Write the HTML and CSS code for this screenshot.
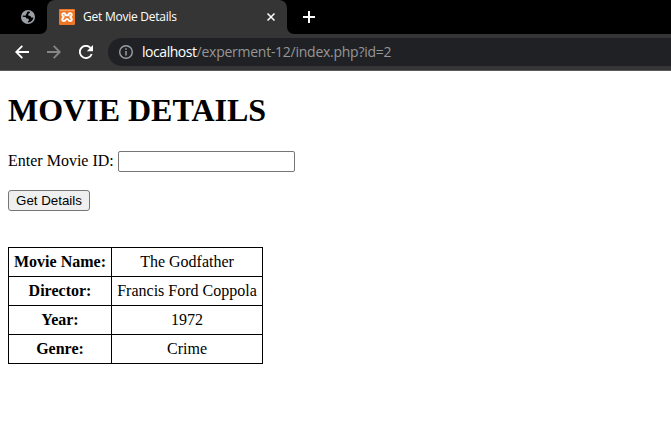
FILE: index.html
```html
<!DOCTYPE html>
<html lang="en">
<head>
<meta charset="utf-8">
<title>Get Movie Details</title>
<link rel="stylesheet" href="styles.css">
</head>
<body>
<header class="browser">
  <div class="tabs">
    <div class="strip-left">
      <svg width="14" height="14" viewBox="0 0 14 14"><circle cx="7" cy="7" r="7" fill="#9aa0a6"/><path d="M6.6 1.6C8.2 1.2 9 1.8 9 2.8L7.2 4 7.4 5.4 9.5 6 10.2 7.5 12.4 7.4C12 10.2 10 12.3 7.2 12.5L6.8 11.5 8.1 10.2 7.4 8.8 5.1 8.3 4.7 7 1.6 6.8C1.7 6.3 1.8 5.9 2 5.5L4.4 5.8 5.2 4.2Z" fill="#000"/></svg>
    </div>
    <div class="tab">
      <svg class="favicon" width="16" height="16" viewBox="0 0 16 16"><rect width="16" height="16" rx="1" fill="#ef7623"/><rect x="1" y="1" width="14" height="1" fill="#f6a365"/><path d="M6.3 6.2V5C6.3 3.9 3.2 3.6 3.2 5.7 3.2 7.3 4.7 7.3 4.7 8.1 4.7 8.9 3.2 8.9 3.2 10.4 3.2 12.5 6 12.4 6.6 10.9L7.3 10.1H8.7L9.4 10.9C10 12.4 12.8 12.5 12.8 10.4 12.8 8.9 11.3 8.9 11.3 8.1 11.3 7.3 12.8 7.3 12.8 5.7 12.8 3.6 9.7 3.9 9.7 5V6.2Z" fill="none" stroke="#fff" stroke-width="1.9" stroke-linejoin="round"/></svg>
      <span class="tab-title">Get Movie Details</span>
      <svg class="close" width="8" height="8" viewBox="0 0 8 8"><path d="M.5.5l7 7M7.5.5l-7 7" stroke="#fff" stroke-width="1.5"/></svg>
    </div>
    <div class="strip-right">
      <svg width="12" height="12" viewBox="0 0 12 12"><path d="M6 0v12M0 6h12" stroke="#fff" stroke-width="2"/></svg>
    </div>
  </div>
  <div class="toolbar">
    <svg width="14" height="14" viewBox="0 0 14 14"><path d="M14 7H1.5M7.3.8L1.2 7l6.1 6.2" fill="none" stroke="#fff" stroke-width="1.8"/></svg>
    <svg width="14" height="14" viewBox="0 0 14 14"><path d="M0 7h12.5M6.7.8L12.8 7l-6.1 6.2" fill="none" stroke="#868686" stroke-width="1.8"/></svg>
    <svg width="14" height="14" viewBox="0 0 14 14"><path d="M12.7 9A6.1 6.1 0 1 1 11.5 2.9" fill="none" stroke="#fff" stroke-width="1.9"/><path d="M14 0v6.2H7.8Z" fill="#fff"/></svg>
    <div class="address">
      <svg width="14" height="14" viewBox="0 0 14 14"><circle cx="7" cy="7" r="6.3" fill="none" stroke="#9aa0a6" stroke-width="1.4"/><path d="M7 3.3v1.5M7 6v4.5" stroke="#9aa0a6" stroke-width="1.5"/></svg>
      <span class="url"><span class="host">localhost</span><span class="path">/experment-12/index.php?id=2</span></span>
    </div>
  </div>
</header>
<main>
  <h1>MOVIE DETAILS</h1>
  <form>
    <div class="field"><label for="id">Enter Movie ID:</label><input id="id" type="text"></div>
    <button type="button">Get Details</button>
  </form>
  <table>
    <tr><th>Movie Name:</th><td>The Godfather</td></tr>
    <tr><th>Director:</th><td>Francis Ford Coppola</td></tr>
    <tr><th>Year:</th><td>1972</td></tr>
    <tr><th>Genre:</th><td>Crime</td></tr>
  </table>
</main>
</body>
</html>
```
FILE: styles.css
```css
* { box-sizing: border-box; }
body {
  margin: 0;
  background: #fff;
  color: #000;
  font: 16px/18px "Liberation Serif", "Times New Roman", serif;
  overflow: hidden;
}
svg { display: block; flex: none; }
.browser {
  height: 71px;
  background: #353535;
  border-bottom: 1px solid #5a5a5a;
  font-family: "Open Sans", "Noto Sans", sans-serif;
}
.tabs {
  display: flex;
  height: 34px;
  background: linear-gradient(#000 0 17px, #353535 17px);
}
.strip-left {
  width: 47px;
  padding: 10px 0 0 21px;
  background: #000;
  border-bottom-right-radius: 7px;
}
.tab {
  display: flex;
  align-items: center;
  width: 240px;
  padding: 0 12px;
  background: #353535;
  border-radius: 8px 8px 0 0;
}
.tab-title {
  margin-left: 8px;
  color: #fff;
  font-size: 12px;
  letter-spacing: -0.24px;
}
.close { margin-left: auto; }
.strip-right {
  flex: 1;
  padding: 11px 0 0 16px;
  background: #000;
  border-bottom-left-radius: 7px;
}
.toolbar {
  display: flex;
  align-items: center;
  gap: 18px;
  height: 36px;
  padding-left: 15px;
}
.address {
  display: flex;
  flex: 1;
  align-items: center;
  gap: 9px;
  height: 28px;
  margin-left: -3px;
  padding-left: 11px;
  background: #202124;
  border-radius: 14px 0 0 14px;
}
.url { font-size: 14px; white-space: nowrap; }
.host { color: #fff; letter-spacing: -0.45px; }
.path { color: #969696; letter-spacing: -0.26px; }
main { padding: 0 8px; }
h1 { margin: 21px 0 22px; font-size: 32px; line-height: 37px; }
.field { display: flex; align-items: center; gap: 4px; height: 21px; }
.field label { width: 106px; padding-bottom: 2px; white-space: nowrap; }
input {
  width: 177px;
  height: 21px;
  margin: 0;
  border: 1px solid #767676;
  border-radius: 2px;
}
button {
  display: block;
  width: 82px;
  height: 21px;
  margin-top: 18px;
  padding: 0;
  border: 1px solid #767676;
  border-radius: 3px;
  background: #efefef;
  color: #000;
  font: 13.333px/17px "Liberation Sans", Arial, sans-serif;
}
table { width: 255px; margin-top: 36px; border-collapse: collapse; text-align: center; }
th, td { height: 29px; padding: 5px; border: 1px solid #000; white-space: nowrap; }
th { width: 103px; }
```
